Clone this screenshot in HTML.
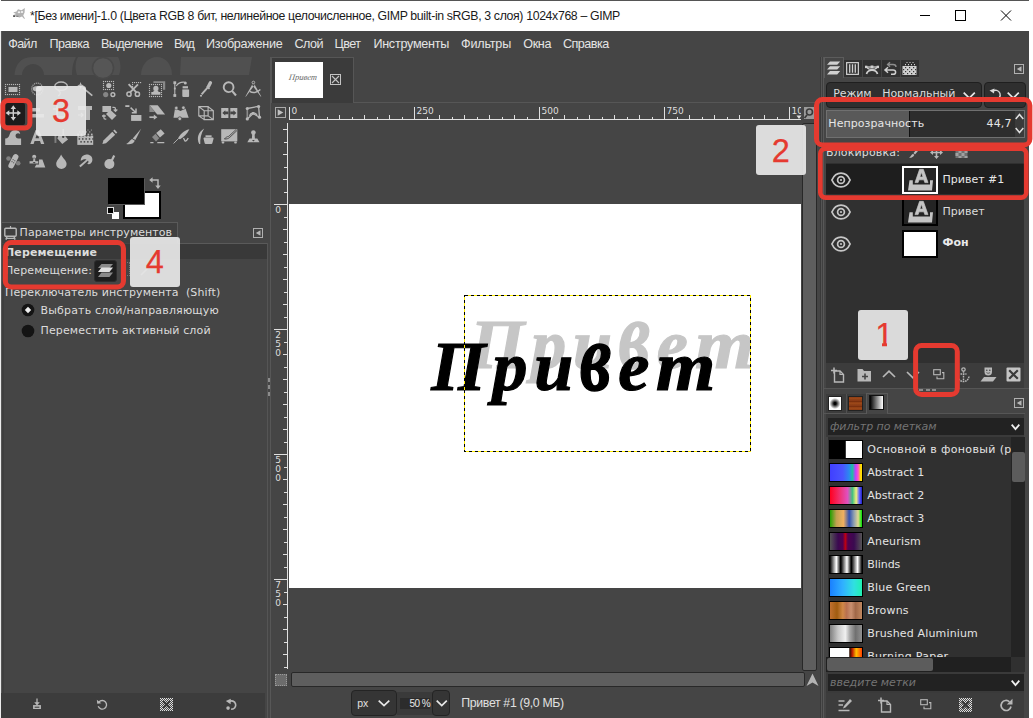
<!DOCTYPE html>
<html><head><meta charset="utf-8"><title>GIMP</title>
<style>
*{box-sizing:border-box;margin:0;padding:0}
html,body{width:1033px;height:718px;overflow:hidden;background:#454545}
body{position:relative;font-family:'DejaVu Sans','Liberation Sans',sans-serif;font-size:11px;color:#dcdcdc}
.a{position:absolute}
.t{position:absolute;white-space:pre}
svg{position:absolute;overflow:visible}
</style></head><body>
<div class="a" style="left:0px;top:0px;width:1033px;height:31px;background:#fff;"></div>
<div class="a" style="left:1px;top:0px;width:1028px;height:1px;background:#555;"></div>
<div class="t" style="left:30.0px;top:9.00px;line-height:14.00px;font-family:'Liberation Sans',sans-serif;font-size:12.3px;color:#1a1a1a;letter-spacing:-0.356px;">*[Без имени]-1.0 (Цвета RGB 8 бит, нелинейное целочисленное, GIMP built-in sRGB, 3 слоя) 1024x768 – GIMP</div>
<svg style="left:0;top:0" width="30" height="30" viewBox="0 0 30 30"><path d="M13.2 12.6 L16.5 11.4 L18 9.3 L21.5 10.3 L24.8 8 L24.6 12.5 L23.2 15.6 L24.9 18.6 L24.3 18.9 L22 16.6 L19.5 17.6 L16.5 16.6 L13.3 17 L13 15.2 L16 14 Z" fill="#b2b2b2"/><ellipse cx="19" cy="12.3" rx="1.3" ry="1" fill="#f4f4f4"/><ellipse cx="22" cy="12" rx="1.2" ry="1" fill="#f4f4f4"/><rect x="13.2" y="15.5" width="1.8" height="1.3" fill="#3a3a3a"/><path d="M16.2 16.3 h2.2" stroke="#666" stroke-width="0.8"/></svg>
<svg style="left:900px;top:0" width="133" height="31" viewBox="0 0 133 31"><g stroke="#000" stroke-width="1" fill="none"><path d="M20 15.5h10"/><rect x="55.5" y="10.5" width="10" height="10"/><path d="M101 10.5l10 10M111 10.5l-10 10"/></g></svg>
<div class="a" style="left:0px;top:31px;width:1033px;height:26px;background:#454545;"></div>
<div class="t" style="left:8.3px;top:37.00px;line-height:14.00px;font-family:'Liberation Sans',sans-serif;font-size:12.6px;color:#e4e4e4;letter-spacing:-0.642px;">Файл</div>
<div class="t" style="left:49.4px;top:37.00px;line-height:14.00px;font-family:'Liberation Sans',sans-serif;font-size:12.6px;color:#e4e4e4;letter-spacing:-0.491px;">Правка</div>
<div class="t" style="left:101.0px;top:37.00px;line-height:14.00px;font-family:'Liberation Sans',sans-serif;font-size:12.6px;color:#e4e4e4;letter-spacing:-0.582px;">Выделение</div>
<div class="t" style="left:174.0px;top:37.00px;line-height:14.00px;font-family:'Liberation Sans',sans-serif;font-size:12.6px;color:#e4e4e4;letter-spacing:-0.932px;">Вид</div>
<div class="t" style="left:206.0px;top:37.00px;line-height:14.00px;font-family:'Liberation Sans',sans-serif;font-size:12.6px;color:#e4e4e4;letter-spacing:-0.259px;">Изображение</div>
<div class="t" style="left:294.5px;top:37.00px;line-height:14.00px;font-family:'Liberation Sans',sans-serif;font-size:12.6px;color:#e4e4e4;letter-spacing:-0.531px;">Слой</div>
<div class="t" style="left:334.5px;top:37.00px;line-height:14.00px;font-family:'Liberation Sans',sans-serif;font-size:12.6px;color:#e4e4e4;letter-spacing:-0.559px;">Цвет</div>
<div class="t" style="left:373.4px;top:37.00px;line-height:14.00px;font-family:'Liberation Sans',sans-serif;font-size:12.6px;color:#e4e4e4;letter-spacing:-0.266px;">Инструменты</div>
<div class="t" style="left:461.0px;top:37.00px;line-height:14.00px;font-family:'Liberation Sans',sans-serif;font-size:12.6px;color:#e4e4e4;letter-spacing:-0.194px;">Фильтры</div>
<div class="t" style="left:523.3px;top:37.00px;line-height:14.00px;font-family:'Liberation Sans',sans-serif;font-size:12.6px;color:#e4e4e4;letter-spacing:-0.391px;">Окна</div>
<div class="t" style="left:563.0px;top:37.00px;line-height:14.00px;font-family:'Liberation Sans',sans-serif;font-size:12.6px;color:#e4e4e4;letter-spacing:-0.544px;">Справка</div>
<div class="a" style="left:0px;top:31px;width:1px;height:687px;background:#ececec;"></div>
<div class="a" style="left:1px;top:31px;width:1px;height:687px;background:#575757;"></div>
<svg style="left:0;top:56px" width="266" height="20" viewBox="0 56 266 20"><g fill="#505050"><path d="M14.5 75 C15 66 20 57 32 57 L76 57 C73 62 72 68 72 75 L44 75 C44 69 39 64 33 64 C27 64 22 69 22 75Z"/><path d="M78 57 L118 57 C121 62 121 70 119 75 L77 75 C75 69 75 62 78 57Z"/><path d="M141 75 C141 65 148 57 157 57 C166 57 172 65 172 75Z"/><path d="M181 57 L252 57 L249 75 L180 75Z"/></g><circle cx="103" cy="68" r="10.5" fill="#565656"/><circle cx="103" cy="68" r="10.5" fill="none" stroke="#484848" stroke-width="1.5"/></svg>
<div class="a" style="left:5px;top:103px;width:20px;height:22px;background:#1c1c1c;border-radius:2px"></div>
<svg style="left:5px;top:81px" width="16" height="16" viewBox="0 0 16 16"><rect x="-0.07" y="2.93" width="1.15" height="1.15" fill="#b8b8b8"/><rect x="-0.07" y="12.93" width="1.15" height="1.15" fill="#b8b8b8"/><rect x="1.93" y="2.93" width="1.15" height="1.15" fill="#b8b8b8"/><rect x="1.93" y="12.93" width="1.15" height="1.15" fill="#b8b8b8"/><rect x="3.93" y="2.93" width="1.15" height="1.15" fill="#b8b8b8"/><rect x="3.93" y="12.93" width="1.15" height="1.15" fill="#b8b8b8"/><rect x="5.93" y="2.93" width="1.15" height="1.15" fill="#b8b8b8"/><rect x="5.93" y="12.93" width="1.15" height="1.15" fill="#b8b8b8"/><rect x="7.93" y="2.93" width="1.15" height="1.15" fill="#b8b8b8"/><rect x="7.93" y="12.93" width="1.15" height="1.15" fill="#b8b8b8"/><rect x="9.93" y="2.93" width="1.15" height="1.15" fill="#b8b8b8"/><rect x="9.93" y="12.93" width="1.15" height="1.15" fill="#b8b8b8"/><rect x="11.93" y="2.93" width="1.15" height="1.15" fill="#b8b8b8"/><rect x="11.93" y="12.93" width="1.15" height="1.15" fill="#b8b8b8"/><rect x="13.93" y="2.93" width="1.15" height="1.15" fill="#b8b8b8"/><rect x="13.93" y="12.93" width="1.15" height="1.15" fill="#b8b8b8"/><rect x="-0.07" y="4.93" width="1.15" height="1.15" fill="#b8b8b8"/><rect x="13.93" y="4.93" width="1.15" height="1.15" fill="#b8b8b8"/><rect x="-0.07" y="6.93" width="1.15" height="1.15" fill="#b8b8b8"/><rect x="13.93" y="6.93" width="1.15" height="1.15" fill="#b8b8b8"/><rect x="-0.07" y="8.93" width="1.15" height="1.15" fill="#b8b8b8"/><rect x="13.93" y="8.93" width="1.15" height="1.15" fill="#b8b8b8"/><rect x="-0.07" y="10.93" width="1.15" height="1.15" fill="#b8b8b8"/><rect x="13.93" y="10.93" width="1.15" height="1.15" fill="#b8b8b8"/><rect x="3.5" y="5.9" width="9" height="5.1" fill="#b8b8b8"/></svg>
<svg style="left:29px;top:81px" width="16" height="16" viewBox="0 0 16 16"><rect x="13.35" y="7.45" width="1.1" height="1.1" fill="#b8b8b8"/><rect x="13.01" y="9.47" width="1.1" height="1.1" fill="#b8b8b8"/><rect x="12.04" y="11.24" width="1.1" height="1.1" fill="#b8b8b8"/><rect x="10.55" y="12.56" width="1.1" height="1.1" fill="#b8b8b8"/><rect x="8.72" y="13.26" width="1.1" height="1.1" fill="#b8b8b8"/><rect x="6.78" y="13.26" width="1.1" height="1.1" fill="#b8b8b8"/><rect x="4.95" y="12.56" width="1.1" height="1.1" fill="#b8b8b8"/><rect x="3.46" y="11.24" width="1.1" height="1.1" fill="#b8b8b8"/><rect x="2.49" y="9.47" width="1.1" height="1.1" fill="#b8b8b8"/><rect x="2.15" y="7.45" width="1.1" height="1.1" fill="#b8b8b8"/><rect x="2.49" y="5.43" width="1.1" height="1.1" fill="#b8b8b8"/><rect x="3.46" y="3.66" width="1.1" height="1.1" fill="#b8b8b8"/><rect x="4.95" y="2.34" width="1.1" height="1.1" fill="#b8b8b8"/><rect x="6.78" y="1.64" width="1.1" height="1.1" fill="#b8b8b8"/><rect x="8.72" y="1.64" width="1.1" height="1.1" fill="#b8b8b8"/><rect x="10.55" y="2.34" width="1.1" height="1.1" fill="#b8b8b8"/><rect x="12.04" y="3.66" width="1.1" height="1.1" fill="#b8b8b8"/><rect x="13.01" y="5.43" width="1.1" height="1.1" fill="#b8b8b8"/><ellipse cx="8.3" cy="7.8" rx="4.6" ry="2.7" fill="#b8b8b8"/></svg>
<svg style="left:53px;top:81px" width="16" height="16" viewBox="0 0 16 16"><ellipse cx="8.1" cy="5.2" rx="6.3" ry="4.2" fill="none" stroke="#b8b8b8" stroke-width="1.3"/><path d="M4.8 8.8 C5.5 10.5 8 10.5 7.2 12.5 C6.8 13.8 6 14.5 5 15" fill="none" stroke="#b8b8b8" stroke-width="1.2"/></svg>
<svg style="left:77px;top:81px" width="16" height="16" viewBox="0 0 16 16"><path d="M6 6.8 L15.3 14.6" stroke="#b8b8b8" stroke-width="1.7"/><path d="M3.6 1 L4.5 3.6 L7 4.6 L4.5 5.6 L3.6 8.2 L2.7 5.6 L0.2 4.6 L2.7 3.6Z" fill="#b8b8b8"/></svg>
<svg style="left:101px;top:81px" width="16" height="16" viewBox="0 0 16 16"><rect x="1.93" y="-0.07" width="1.15" height="1.15" fill="#b8b8b8"/><rect x="1.93" y="7.93" width="1.15" height="1.15" fill="#b8b8b8"/><rect x="3.93" y="-0.07" width="1.15" height="1.15" fill="#b8b8b8"/><rect x="3.93" y="7.93" width="1.15" height="1.15" fill="#b8b8b8"/><rect x="5.93" y="-0.07" width="1.15" height="1.15" fill="#b8b8b8"/><rect x="5.93" y="7.93" width="1.15" height="1.15" fill="#b8b8b8"/><rect x="7.93" y="-0.07" width="1.15" height="1.15" fill="#b8b8b8"/><rect x="7.93" y="7.93" width="1.15" height="1.15" fill="#b8b8b8"/><rect x="9.93" y="-0.07" width="1.15" height="1.15" fill="#b8b8b8"/><rect x="9.93" y="7.93" width="1.15" height="1.15" fill="#b8b8b8"/><rect x="11.93" y="-0.07" width="1.15" height="1.15" fill="#b8b8b8"/><rect x="11.93" y="7.93" width="1.15" height="1.15" fill="#b8b8b8"/><rect x="1.93" y="1.93" width="1.15" height="1.15" fill="#b8b8b8"/><rect x="11.93" y="1.93" width="1.15" height="1.15" fill="#b8b8b8"/><rect x="1.93" y="3.93" width="1.15" height="1.15" fill="#b8b8b8"/><rect x="11.93" y="3.93" width="1.15" height="1.15" fill="#b8b8b8"/><rect x="1.93" y="5.93" width="1.15" height="1.15" fill="#b8b8b8"/><rect x="11.93" y="5.93" width="1.15" height="1.15" fill="#b8b8b8"/><circle cx="7.8" cy="4.5" r="2.6" fill="#b8b8b8"/><circle cx="4.7" cy="13.6" r="2.6" fill="#858585"/><circle cx="11.9" cy="13.6" r="1.9" fill="none" stroke="#b8b8b8" stroke-width="1.4"/></svg>
<svg style="left:125px;top:81px" width="16" height="16" viewBox="0 0 16 16"><rect x="7.00" y="1.00" width="1.15" height="1.15" fill="#b8b8b8"/><rect x="9.00" y="1.00" width="1.15" height="1.15" fill="#b8b8b8"/><rect x="11.00" y="1.00" width="1.15" height="1.15" fill="#b8b8b8"/><rect x="13.00" y="1.00" width="1.15" height="1.15" fill="#b8b8b8"/><rect x="15.00" y="1.00" width="1.15" height="1.15" fill="#b8b8b8"/><rect x="7.00" y="3.00" width="1.15" height="1.15" fill="#b8b8b8"/><rect x="7.00" y="5.00" width="1.15" height="1.15" fill="#b8b8b8"/><path d="M3.6 3.2 L11.6 11.6 M13 3.4 L4.8 11.6" stroke="#b8b8b8" stroke-width="1.9" fill="none"/><circle cx="4" cy="13.2" r="2.1" fill="none" stroke="#b8b8b8" stroke-width="1.5"/><circle cx="12.4" cy="13.2" r="2.1" fill="none" stroke="#b8b8b8" stroke-width="1.5"/></svg>
<svg style="left:149px;top:81px" width="16" height="16" viewBox="0 0 16 16"><path d="M4.4 0.2 H16.2 V8.8 H14 V2 H4.4Z" fill="#8a8a8a"/><rect x="-0.07" y="2.93" width="1.15" height="1.15" fill="#b8b8b8"/><rect x="-0.07" y="14.93" width="1.15" height="1.15" fill="#b8b8b8"/><rect x="1.93" y="2.93" width="1.15" height="1.15" fill="#b8b8b8"/><rect x="1.93" y="14.93" width="1.15" height="1.15" fill="#b8b8b8"/><rect x="3.93" y="2.93" width="1.15" height="1.15" fill="#b8b8b8"/><rect x="3.93" y="14.93" width="1.15" height="1.15" fill="#b8b8b8"/><rect x="5.93" y="2.93" width="1.15" height="1.15" fill="#b8b8b8"/><rect x="5.93" y="14.93" width="1.15" height="1.15" fill="#b8b8b8"/><rect x="7.93" y="2.93" width="1.15" height="1.15" fill="#b8b8b8"/><rect x="7.93" y="14.93" width="1.15" height="1.15" fill="#b8b8b8"/><rect x="9.93" y="2.93" width="1.15" height="1.15" fill="#b8b8b8"/><rect x="9.93" y="14.93" width="1.15" height="1.15" fill="#b8b8b8"/><rect x="11.93" y="2.93" width="1.15" height="1.15" fill="#b8b8b8"/><rect x="11.93" y="14.93" width="1.15" height="1.15" fill="#b8b8b8"/><rect x="-0.07" y="4.93" width="1.15" height="1.15" fill="#b8b8b8"/><rect x="11.93" y="4.93" width="1.15" height="1.15" fill="#b8b8b8"/><rect x="-0.07" y="6.93" width="1.15" height="1.15" fill="#b8b8b8"/><rect x="11.93" y="6.93" width="1.15" height="1.15" fill="#b8b8b8"/><rect x="-0.07" y="8.93" width="1.15" height="1.15" fill="#b8b8b8"/><rect x="11.93" y="8.93" width="1.15" height="1.15" fill="#b8b8b8"/><rect x="-0.07" y="10.93" width="1.15" height="1.15" fill="#b8b8b8"/><rect x="11.93" y="10.93" width="1.15" height="1.15" fill="#b8b8b8"/><rect x="-0.07" y="12.93" width="1.15" height="1.15" fill="#b8b8b8"/><rect x="11.93" y="12.93" width="1.15" height="1.15" fill="#b8b8b8"/><circle cx="6.9" cy="7.4" r="2.6" fill="#b8b8b8"/><path d="M2.3 13.7 V11 H4.4 V9.7 H9.4 V11 H11.4 V13.7Z" fill="#b8b8b8"/></svg>
<svg style="left:173px;top:81px" width="16" height="16" viewBox="0 0 16 16"><path d="M1.8 1.5v13" stroke="#b8b8b8" stroke-width="1.1"/><rect x="0.4" y="0.3" width="2.8" height="2.8" fill="#b8b8b8"/><rect x="0.4" y="13.1" width="2.8" height="2.8" fill="#b8b8b8"/><rect x="0.9" y="6.6" width="1.8" height="1.8" fill="#b8b8b8"/><path d="M3.3 5 C5 2.2 8.5 0.8 11.8 1.2" fill="none" stroke="#b8b8b8" stroke-width="1.1"/><circle cx="12.3" cy="2" r="1.5" fill="#b8b8b8"/><rect x="9.6" y="5.2" width="5.4" height="1.9" fill="#b8b8b8"/><rect x="9.6" y="7.4" width="5.4" height="0.9" fill="#8a8a8a"/><path d="M9.3 8.5 h6.8 v6.5 a1 1 0 0 1 -1 1 h-4.8 a1 1 0 0 1 -1 -1Z" fill="#b8b8b8"/></svg>
<svg style="left:197px;top:81px" width="16" height="16" viewBox="0 0 16 16"><path d="M13.4 1.8 L11.6 5.2" stroke="#b8b8b8" stroke-width="3.4" stroke-linecap="round"/><path d="M9.6 5.3 L12.5 7.9" stroke="#b8b8b8" stroke-width="1.6"/><path d="M10.8 6.4 L4.6 13.4" stroke="#b8b8b8" stroke-width="1.9"/><circle cx="4" cy="14.8" r="1.05" fill="#b8b8b8"/></svg>
<svg style="left:221px;top:81px" width="16" height="16" viewBox="0 0 16 16"><circle cx="7.6" cy="6.2" r="4.9" fill="none" stroke="#b8b8b8" stroke-width="1.9"/><path d="M11 9.9 L15 14.5" stroke="#b8b8b8" stroke-width="2.1"/></svg>
<svg style="left:245px;top:81px" width="16" height="16" viewBox="0 0 16 16"><path d="M8.4 1.5 L9.6 4 L0.8 15.8 L0.4 15.6 L7.2 3.6Z M8.4 1.5 L7.2 4 L15.9 15.8 L16.3 15.6 L9.6 3.6Z" fill="#b8b8b8"/><circle cx="8.4" cy="1.5" r="1.3" fill="none" stroke="#b8b8b8" stroke-width="0.9"/><path d="M4.8 10.4 C7.5 12.2 12 12 15.4 8.6" fill="none" stroke="#b8b8b8" stroke-width="1.4"/></svg>
<svg style="left:5px;top:105px" width="16" height="16" viewBox="0 0 16 16"><path d="M8.3 0.3 L11 4 H9 V7.3 H12.3 V5.3 L16 8 L12.3 10.7 V8.7 H9 V12 H11 L8.3 15.7 L5.6 12 H7.6 V8.7 H4.3 V10.7 L0.6 8 L4.3 5.3 V7.3 H7.6 V4 H5.6Z" fill="#d0d0d0"/></svg>
<svg style="left:29px;top:105px" width="16" height="16" viewBox="0 0 16 16"><rect x="2" y="3" width="9" height="3.5" fill="#b8b8b8"/><rect x="2" y="9" width="13" height="3.5" fill="#b8b8b8"/><path d="M1 1v14" stroke="#b8b8b8" stroke-width="1"/></svg>
<svg style="left:53px;top:105px" width="16" height="16" viewBox="0 0 16 16"><path d="M4 0v12h12M0 4h12v12" fill="none" stroke="#b8b8b8" stroke-width="1.6"/></svg>
<svg style="left:77px;top:105px" width="16" height="16" viewBox="0 0 16 16"><rect x="1" y="1" width="14" height="4" fill="#b8b8b8"/><rect x="8" y="5" width="5" height="10" fill="#b8b8b8"/><path d="M1 10h5m-2-2l2 2l-2 2" stroke="#b8b8b8" fill="none" stroke-width="1.2"/></svg>
<svg style="left:101px;top:105px" width="16" height="16" viewBox="0 0 16 16"><path d="M1.4 0.9 H10.1 V5.2 L7.5 7 H1.4Z" fill="#b8b8b8"/><path d="M9.2 4.8 L15.5 10.5 L11 15 L5 9.1Z" fill="#b8b8b8"/><path d="M11.4 2.4 h1.6 c1 0 1.5 .5 1.5 1.5 v2 m-1.8 -1.4 l1.8 1.9 l1.8 -1.9" fill="none" stroke="#b8b8b8" stroke-width="1.2"/><path d="M2.9 9.6 v3.2 c0 1 .5 1.4 1.4 1.4 h1 M1 11 h3.8" fill="none" stroke="#b8b8b8" stroke-width="1.3"/></svg>
<svg style="left:125px;top:105px" width="16" height="16" viewBox="0 0 16 16"><rect x="0.3" y="0.2" width="4.1" height="1.8" fill="#b8b8b8"/><path d="M5.6 2.6 L10.4 7.2 M11 3.6 V7.8 H6.8" fill="none" stroke="#b8b8b8" stroke-width="1.5"/><rect x="6.1" y="10" width="10.3" height="5.9" fill="#b8b8b8"/></svg>
<svg style="left:149px;top:105px" width="16" height="16" viewBox="0 0 16 16"><path d="M0.4 0.2 H8.7 L16.1 9.6 H8.3Z" fill="#b8b8b8"/><path d="M0.4 0.2 V7 H6.1Z" fill="#8a8a8a"/><path d="M0.4 12.2 h5.5" stroke="#b8b8b8" stroke-width="1.7"/><path d="M4.8 9.6 L8.4 12.2 L4.8 14.8Z" fill="#b8b8b8"/></svg>
<svg style="left:173px;top:105px" width="16" height="16" viewBox="0 0 16 16"><path d="M2 3.5 L7.5 6 L12.5 3.5 L15.7 12.8 H0.5Z" fill="#b8b8b8"/><circle cx="3.3" cy="3" r="1.7" fill="#b8b8b8" stroke="#454545" stroke-width=".5"/><circle cx="10.4" cy="2.8" r="1.7" fill="#b8b8b8" stroke="#454545" stroke-width=".5"/><circle cx="6.8" cy="13.7" r="1.9" fill="#b8b8b8" stroke="#454545" stroke-width=".8"/></svg>
<svg style="left:197px;top:105px" width="16" height="16" viewBox="0 0 16 16"><path d="M1.8 1.6 H11.1 V10.9 H1.8Z M7.2 5.7 H16.3 V14.6 H7.2Z M1.8 1.6 L7.2 5.7 M11.1 1.6 L16.3 5.7 M1.8 10.9 L7.2 14.6 M11.1 10.9 L16.3 14.6" fill="none" stroke="#b8b8b8" stroke-width="1.15"/></svg>
<svg style="left:221px;top:105px" width="16" height="16" viewBox="0 0 16 16"><rect x="0.2" y="3" width="7.2" height="10" fill="#b8b8b8"/><rect x="9.3" y="3" width="7" height="10" fill="#b8b8b8"/><path d="M1.3 7.9 L4.3 5.3 V6.6 H7.4 V9.2 H4.3 V10.5Z M15.4 7.9 L12.4 5.3 V6.6 H9.3 V9.2 H12.4 V10.5Z" fill="#454545"/></svg>
<svg style="left:245px;top:105px" width="16" height="16" viewBox="0 0 16 16"><path d="M2.3 3.5 L2.3 13.9" stroke="#8c8c8c" stroke-width="1.6"/><path d="M2.3 3.5 L13.6 1.3 L14.5 12.2 L8.1 8.5 L2.3 13.9" fill="none" stroke="#b8b8b8" stroke-width="1.3"/><path d="M4.6 11 C5.5 7.2 10 6.8 12 9.8" fill="none" stroke="#b8b8b8" stroke-width="1.3"/><circle cx="2.3" cy="3.5" r="1.6" fill="#b8b8b8"/><circle cx="13.6" cy="1.5" r="1.6" fill="#b8b8b8"/><circle cx="14.5" cy="12.2" r="1.6" fill="#b8b8b8"/><circle cx="2.3" cy="13.9" r="1.6" fill="#b8b8b8"/><circle cx="8.1" cy="8.3" r="1.4" fill="#b8b8b8"/></svg>
<svg style="left:5px;top:129px" width="16" height="16" viewBox="0 0 16 16"><path d="M0.2 15.9 V9.6 C3 9.6 4 7.5 4.6 5.5 C5.6 1.8 9 0.2 12.5 1.5 C14 2.1 15 3.4 15.2 5 C13.8 4 12.2 4 11.2 5 C10 6.2 10.5 9.2 13.2 9.6 H16.1 V15.9Z" fill="#b8b8b8"/></svg>
<svg style="left:29px;top:129px" width="16" height="16" viewBox="0 0 16 16"><path d="M1.3 14.9 L6.6 0.9 H10 L15.3 14.9 H12 L11 11.9 H5.6 L4.6 14.9Z M6.5 9.3 H10.1 L8.3 3.8Z" fill="#b8b8b8"/></svg>
<svg style="left:53px;top:129px" width="16" height="16" viewBox="0 0 16 16"><rect x="1.5" y="5.7" width="1.9" height="8.2" fill="#808080"/><path d="M5.4 6.7 L11.2 5.7 L15 10.5 L9.3 14.9 L4.4 9.6Z" fill="#b8b8b8"/><path d="M10.2 0 v7.5" stroke="#b8b8b8" stroke-width="1.4"/><circle cx="10.2" cy="7.8" r="1.2" fill="#454545"/></svg>
<svg style="left:77px;top:129px" width="16" height="16" viewBox="0 0 16 16"><rect x="0.3" y="6.7" width="15.9" height="9.2" fill="#b8b8b8"/><rect x="1.60" y="9.20" width="1.5" height="1.5" fill="#454545"/><rect x="5.00" y="9.20" width="1.5" height="1.5" fill="#454545"/><rect x="8.40" y="9.20" width="1.5" height="1.5" fill="#454545"/><rect x="11.80" y="9.20" width="1.5" height="1.5" fill="#454545"/><rect x="15.20" y="9.20" width="1.5" height="1.5" fill="#454545"/><rect x="3.30" y="12.10" width="1.5" height="1.5" fill="#454545"/><rect x="6.70" y="12.10" width="1.5" height="1.5" fill="#454545"/><rect x="10.10" y="12.10" width="1.5" height="1.5" fill="#454545"/><rect x="13.50" y="12.10" width="1.5" height="1.5" fill="#454545"/><rect x="0.30" y="4.60" width="1.7" height="1.7" fill="#b8b8b8"/><rect x="3.70" y="4.60" width="1.7" height="1.7" fill="#b8b8b8"/><rect x="7.10" y="4.60" width="1.7" height="1.7" fill="#b8b8b8"/><rect x="10.50" y="4.60" width="1.7" height="1.7" fill="#b8b8b8"/><rect x="13.90" y="4.60" width="1.7" height="1.7" fill="#b8b8b8"/><rect x="2.00" y="6.10" width="1.4" height="1.4" fill="#454545"/><rect x="5.40" y="6.10" width="1.4" height="1.4" fill="#454545"/><rect x="8.80" y="6.10" width="1.4" height="1.4" fill="#454545"/><rect x="12.20" y="6.10" width="1.4" height="1.4" fill="#454545"/><rect x="2.00" y="2.40" width="1.1" height="1.1" fill="#b8b8b8"/><rect x="5.40" y="2.40" width="1.1" height="1.1" fill="#b8b8b8"/><rect x="8.80" y="2.40" width="1.1" height="1.1" fill="#b8b8b8"/><rect x="12.20" y="2.40" width="1.1" height="1.1" fill="#b8b8b8"/><rect x="10.50" y="0.60" width="0.9" height="0.9" fill="#b8b8b8"/><rect x="13.90" y="0.60" width="0.9" height="0.9" fill="#b8b8b8"/></svg>
<svg style="left:101px;top:129px" width="16" height="16" viewBox="0 0 16 16"><path d="M11.3 2.8 L14.2 5.7 L5 14.2 L1.4 15 L2.4 11.4Z" fill="#b8b8b8"/><path d="M12.2 1.8 L13.6 0.6 L16.3 3.4 L15 4.8Z" fill="#b8b8b8"/></svg>
<svg style="left:125px;top:129px" width="16" height="16" viewBox="0 0 16 16"><path d="M16.1 -0.3 L10.4 11 L7.7 9.4Z" fill="#b8b8b8"/><path d="M7 10 L9.8 11.7 C8.8 14.8 5 15.6 1.2 15 C3.6 14 4.6 11.5 7 10Z" fill="#b8b8b8"/></svg>
<svg style="left:149px;top:129px" width="16" height="16" viewBox="0 0 16 16"><path d="M11.8 0.2 L15.6 4.6 L10.9 8.6 L7.2 4.1Z" fill="#b8b8b8"/><path d="M6.6 4.8 L10.2 9.2 L7 12.4 L3 8Z" fill="#8a8a8a"/><path d="M1.3 13.7h3.2M8.3 13.7h7" stroke="#b8b8b8" stroke-width="1.3"/></svg>
<svg style="left:173px;top:129px" width="16" height="16" viewBox="0 0 16 16"><path d="M16.4 0.2 C10.5 1.5 6.8 5.5 5 9.6 L7 10.2 C10.5 8.2 14.3 5 16.4 0.2Z" fill="#b8b8b8"/><path d="M0.5 14.5 L5.6 9.4" stroke="#b8b8b8" stroke-width=".9"/><path d="M10.5 9 L12 12 C12.8 12.6 14.2 11.2 15.2 9" fill="none" stroke="#b8b8b8" stroke-width="1.3"/></svg>
<svg style="left:197px;top:129px" width="16" height="16" viewBox="0 0 16 16"><path d="M7.2 -0.6 C1.5 3 -0.8 8.5 2.2 15 L3.3 15 C3 10 4 4 7.2 -0.6Z" fill="#b8b8b8"/><rect x="8.5" y="6.3" width="6.1" height="1.9" fill="#b8b8b8"/><path d="M6.5 9.6 C6.5 8.8 7 8.5 7.8 8.5 h7.5 c.8 0 1.3 .3 1.3 1.1 L15.4 14 c-.1 .7 -.5 1 -1.2 1 h-5.4 c-.7 0 -1.1 -.3 -1.2 -1Z" fill="#b8b8b8"/></svg>
<svg style="left:221px;top:129px" width="16" height="16" viewBox="0 0 16 16"><rect x="0.2" y="0.2" width="16.1" height="12.2" fill="#b8b8b8"/><rect x="0.7" y="12.4" width="2.6" height="2.2" rx=".8" fill="#b8b8b8"/><rect x="13.2" y="12.4" width="2.6" height="2.2" rx=".8" fill="#b8b8b8"/><path d="M15.6 0 L7.8 7.3 C6 7.6 4.5 8.6 3.4 10 C5.5 10.2 7.5 9.6 8.8 8.3 L16.3 1.2" fill="#b8b8b8" stroke="#454545" stroke-width="0.9"/></svg>
<svg style="left:245px;top:129px" width="16" height="16" viewBox="0 0 16 16"><circle cx="8.4" cy="3.6" r="2.3" fill="#b8b8b8"/><path d="M7.2 5 h2.4 l.3 4.4 h2.4 L14.5 13.3 H2.3 L4.5 9.4 h2.4Z" fill="#b8b8b8"/><path d="M7 10.9 h2.8 l-1.4 1.7Z" fill="#454545"/></svg>
<svg style="left:5px;top:154px" width="16" height="16" viewBox="0 0 16 16"><circle cx="3.5" cy="4.5" r="2.3" fill="#808080"/><circle cx="13.2" cy="9.3" r="2.3" fill="#808080"/><rect x="-7.7" y="-2.8" width="15.4" height="5.6" rx="2.7" transform="translate(8.4 7.2) rotate(-63)" fill="#b8b8b8"/><rect x="7.60" y="5.20" width="1.0" height="1.0" fill="#454545"/><rect x="9.30" y="6.30" width="1.0" height="1.0" fill="#454545"/><rect x="6.50" y="7.20" width="1.0" height="1.0" fill="#454545"/><rect x="8.20" y="8.30" width="1.0" height="1.0" fill="#454545"/></svg>
<svg style="left:29px;top:154px" width="16" height="16" viewBox="0 0 16 16"><path d="M10 5.4 H13.4 L16.3 13.6 H5.7 L7.3 10.6 H10Z" fill="#b8b8b8"/><circle cx="5.2" cy="2.8" r="2" fill="#b8b8b8"/><path d="M4.2 4 h2 l.3 2.9 h3 V9.8 H0.3 V6.9 h3.6Z" fill="#b8b8b8" stroke="#454545" stroke-width=".5"/><path d="M3.7 7.9 h3 l-1.5 1.5Z" fill="#454545"/></svg>
<svg style="left:53px;top:154px" width="16" height="16" viewBox="0 0 16 16"><path d="M8.1 0.6 C10 4.5 13.6 7 13.6 9.9 A5.2 5 0 0 1 3.2 9.9 C3.2 7 6.4 4.5 8.1 0.6Z" fill="#b8b8b8"/></svg>
<svg style="left:77px;top:154px" width="16" height="16" viewBox="0 0 16 16"><path d="M8.5 0.7 C12.5 0 15.6 2.5 15.4 6 C15.2 9.5 12.3 11 10 9.8 C11.5 9 12 7.5 11 6.4 L3.6 13.2 L2.2 11.8 L9.5 5.4 C7.5 5 5.2 5.5 3.8 7 C3.6 3.6 5.6 1.2 8.5 0.7Z" fill="#b8b8b8"/></svg>
<svg style="left:101px;top:154px" width="16" height="16" viewBox="0 0 16 16"><circle cx="8.4" cy="10" r="5" fill="#b8b8b8"/><path d="M10.8 6.4 L13.2 1.6" stroke="#b8b8b8" stroke-width="2.2"/></svg>
<div class="a" style="left:123px;top:191px;width:38px;height:27.5px;background:#000;"></div>
<div class="a" style="left:124.6px;top:192.7px;width:34.7px;height:24.4px;background:#fff;"></div>
<div class="a" style="left:108.5px;top:178.5px;width:36.5px;height:26px;background:#5a5a5a;"></div>
<div class="a" style="left:107.5px;top:177.5px;width:36.5px;height:26px;background:#000;"></div>
<svg style="left:149px;top:177px" width="12" height="12" viewBox="0 0 12 12"><path d="M3 3 h6 v6" fill="none" stroke="#b8b8b8" stroke-width="1.5"/><path d="M0.2 3 L3.6 0.3 V5.7Z M9 11.9 L6.3 8.4 H11.7Z" fill="#b8b8b8"/></svg>
<div class="a" style="left:112.2px;top:211.8px;width:7px;height:7px;background:#fff;"></div>
<div class="a" style="left:107px;top:207px;width:7px;height:7px;background:#000;border:1px solid #e0e0e0"></div>
<div class="a" style="left:1px;top:222px;width:177px;height:21px;background:#3f3f3f;border:1px solid #5a5a5a;border-bottom:none"></div>
<div class="a" style="left:178px;top:243px;width:90px;height:1px;background:#5a5a5a;"></div>
<svg style="left:4px;top:226px" width="13" height="14" viewBox="0 0 13 14"><path d="M6.5 0v2" stroke="#b8b8b8" stroke-width="1.2"/><rect x="0.8" y="2.3" width="11.4" height="8" rx="1" fill="none" stroke="#b8b8b8" stroke-width="1.4"/><path d="M1.5 12.3h10M3 10.5 L2 13.8 M10 10.5 L11 13.8" stroke="#b8b8b8" stroke-width="1.3"/></svg>
<div class="t" style="left:19.6px;top:226.00px;line-height:13.00px;letter-spacing:0.039px;">Параметры инструментов</div>
<div class="a" style="left:253px;top:228px;width:10px;height:10px;background:#454545;border:1px solid #b0b0b0"></div>
<svg style="left:255px;top:230px" width="6" height="6" viewBox="0 0 6 6"><path d="M5.5 0.3 V5.7 L0.8 3Z" fill="#b8b8b8"/></svg>
<div class="a" style="left:2px;top:244px;width:265px;height:15px;background:#393939;"></div>
<div class="a" style="left:2px;top:244px;width:2px;height:449px;background:#3f3f3f;"></div>
<div class="t" style="left:5.0px;top:246.00px;line-height:13.00px;font-weight:700;letter-spacing:0.123px;">Перемещение</div>
<div class="t" style="left:5.0px;top:264.00px;line-height:13.00px;letter-spacing:0.099px;">Перемещение:</div>
<div class="a" style="left:94px;top:259.5px;width:23px;height:22px;background:#1e1e1e;border-radius:3px;border:1px solid #2c2c2c"></div>
<svg style="left:97px;top:263px" width="17" height="15" viewBox="0 0 17 15"><path d="M4.5 1 H16 L12.5 5 H1Z" fill="#8a8a8a"/><path d="M4.5 4.5 H16 L12.5 9 H1Z" fill="#e0e0e0"/><path d="M4.5 9.5 H16 L12.5 14 H1Z" fill="#8a8a8a"/></svg>
<div class="a" style="left:121px;top:262px;width:9px;height:14px;background:transparent;border:1px dotted #777"></div>
<svg style="left:140px;top:262px" width="14" height="14" viewBox="0 0 14 14"><path d="M1 13 L8 6" stroke="#999" stroke-width="1.5"/><circle cx="10" cy="4" r="2.5" fill="#999"/></svg>
<div class="t" style="left:5.0px;top:286.00px;line-height:13.00px;letter-spacing:0.114px;">Переключатель инструмента  (Shift)</div>
<svg style="left:21.2px;top:303.4px" width="14" height="14" viewBox="0 0 14 14"><circle cx="7" cy="7" r="6.3" fill="#141414"/></svg>
<svg style="left:21.2px;top:323.8px" width="14" height="14" viewBox="0 0 14 14"><circle cx="7" cy="7" r="6.3" fill="#141414"/></svg>
<svg style="left:21.2px;top:303.4px" width="14" height="14" viewBox="0 0 14 14"><path d="M7 3.8 L10.2 7 L7 10.2 L3.8 7Z" fill="#f0f0f0"/></svg>
<div class="t" style="left:40.5px;top:304.00px;line-height:13.00px;letter-spacing:0.173px;">Выбрать слой/направляющую</div>
<div class="t" style="left:40.5px;top:324.00px;line-height:13.00px;letter-spacing:0.137px;">Переместить активный слой</div>
<div class="a" style="left:1px;top:693px;width:264px;height:25px;background:#3c3c3c;"></div>
<svg style="left:31.6px;top:698.4px" width="10" height="11.8" viewBox="1 0 12 15"><path d="M7 0.5v7" stroke="#b8b8b8" stroke-width="1.6"/><path d="M3.5 5.5 L7 9.5 L10.5 5.5Z" fill="#b8b8b8"/><path d="M2 9 h10 v5 H2Z" fill="#b8b8b8"/><rect x="4" y="11" width="6" height="1.4" fill="#3c3c3c"/></svg>
<svg style="left:95.6px;top:698.3px" width="12.4" height="12.4" viewBox="0 0 14 15"><path d="M3 5 A5.2 5.2 0 1 1 2.2 10" fill="none" stroke="#b8b8b8" stroke-width="1.6"/><path d="M0.5 2 L1 7 L6 6.3Z" fill="#b8b8b8"/></svg>
<svg style="left:160px;top:698px" width="13" height="13" viewBox="0 0 13 13"><defs><pattern id="dz" width="2" height="2" patternUnits="userSpaceOnUse"><rect width="2" height="2" fill="#4a4a4a"/><rect width="1" height="1" fill="#e0e0e0"/><rect x="1" y="1" width="1" height="1" fill="#e0e0e0"/></pattern></defs><rect x="0" y="0" width="13" height="13" fill="url(#dz)" shape-rendering="crispEdges"/><path d="M3 3 L10 10 M10 3 L3 10" stroke="#3a3a3a" stroke-width="2.2"/></svg>
<svg style="left:225px;top:698.3px" width="12.4" height="12.4" viewBox="0 0 14 15"><path d="M4.5 4.5 A5 5 0 1 1 7 13.5" fill="none" stroke="#b8b8b8" stroke-width="2"/><path d="M0.5 3.5 L6.5 1 L6.3 7.5Z" fill="#b8b8b8"/><circle cx="3.2" cy="12.2" r="2.2" fill="#b8b8b8"/></svg>
<div class="a" style="left:267px;top:243px;width:1px;height:475px;background:#555;"></div>
<div class="a" style="left:270px;top:57px;width:1px;height:661px;background:#575757;"></div>
<div class="a" style="left:268px;top:378px;width:2px;height:4px;background:#8c8c8c;"></div>
<div class="a" style="left:268px;top:385px;width:2px;height:4px;background:#8c8c8c;"></div>
<div class="a" style="left:268px;top:392px;width:2px;height:4px;background:#8c8c8c;"></div>
<div class="a" style="left:271px;top:57px;width:83px;height:46px;background:#3b3b3b;border:1px solid #565656;border-bottom:none"></div>
<div class="a" style="left:354px;top:102px;width:466px;height:1px;background:#565656;"></div>
<div class="a" style="left:275px;top:62px;width:48px;height:36px;background:#fff;"></div>
<div class="t" style="left:289.0px;top:72.00px;line-height:10.00px;font-family:'Liberation Serif',serif;font-size:8.5px;font-style:italic;color:#666;transform:skewX(-8deg);">Привет</div>
<svg style="left:330px;top:74px" width="11" height="11" viewBox="0 0 11 11"><rect x="0.5" y="0.5" width="10" height="10" fill="none" stroke="#c4c4c4" stroke-width="1"/><path d="M2 2 L9 9 M9 2 L2 9" stroke="#c4c4c4" stroke-width="1.1"/></svg>
<div class="a" style="left:275px;top:107px;width:11px;height:11px;background:#454545;border:1px solid #aaa"></div>
<svg style="left:277px;top:109px" width="7" height="7" viewBox="0 0 7 7"><path d="M0.7 0.3 V6.7 L6.3 3.5Z" fill="#c0c0c0"/></svg>
<div class="a" style="left:289px;top:120px;width:513px;height:551px;background:#454545;"></div>
<div class="a" style="left:289px;top:204px;width:512px;height:384px;background:#fff;"></div>
<svg style="left:272px;top:104px" width="548" height="16" viewBox="272 104 548 16" shape-rendering="crispEdges"><rect x="289" y="119" width="512" height="1" fill="#e0e0e0"/><rect x="289" y="107" width="1" height="13" fill="#e0e0e0"/><rect x="302" y="117" width="1" height="3" fill="#e0e0e0"/><rect x="314" y="115" width="1" height="5" fill="#e0e0e0"/><rect x="327" y="117" width="1" height="3" fill="#e0e0e0"/><rect x="339" y="115" width="1" height="5" fill="#e0e0e0"/><rect x="352" y="117" width="1" height="3" fill="#e0e0e0"/><rect x="364" y="115" width="1" height="5" fill="#e0e0e0"/><rect x="377" y="117" width="1" height="3" fill="#e0e0e0"/><rect x="389" y="115" width="1" height="5" fill="#e0e0e0"/><rect x="402" y="117" width="1" height="3" fill="#e0e0e0"/><rect x="414" y="107" width="1" height="13" fill="#e0e0e0"/><rect x="427" y="117" width="1" height="3" fill="#e0e0e0"/><rect x="439" y="115" width="1" height="5" fill="#e0e0e0"/><rect x="452" y="117" width="1" height="3" fill="#e0e0e0"/><rect x="464" y="115" width="1" height="5" fill="#e0e0e0"/><rect x="477" y="117" width="1" height="3" fill="#e0e0e0"/><rect x="489" y="115" width="1" height="5" fill="#e0e0e0"/><rect x="502" y="117" width="1" height="3" fill="#e0e0e0"/><rect x="514" y="115" width="1" height="5" fill="#e0e0e0"/><rect x="527" y="117" width="1" height="3" fill="#e0e0e0"/><rect x="539" y="107" width="1" height="13" fill="#e0e0e0"/><rect x="552" y="117" width="1" height="3" fill="#e0e0e0"/><rect x="564" y="115" width="1" height="5" fill="#e0e0e0"/><rect x="577" y="117" width="1" height="3" fill="#e0e0e0"/><rect x="589" y="115" width="1" height="5" fill="#e0e0e0"/><rect x="602" y="117" width="1" height="3" fill="#e0e0e0"/><rect x="614" y="115" width="1" height="5" fill="#e0e0e0"/><rect x="627" y="117" width="1" height="3" fill="#e0e0e0"/><rect x="639" y="115" width="1" height="5" fill="#e0e0e0"/><rect x="652" y="117" width="1" height="3" fill="#e0e0e0"/><rect x="664" y="107" width="1" height="13" fill="#e0e0e0"/><rect x="677" y="117" width="1" height="3" fill="#e0e0e0"/><rect x="689" y="115" width="1" height="5" fill="#e0e0e0"/><rect x="702" y="117" width="1" height="3" fill="#e0e0e0"/><rect x="714" y="115" width="1" height="5" fill="#e0e0e0"/><rect x="727" y="117" width="1" height="3" fill="#e0e0e0"/><rect x="739" y="115" width="1" height="5" fill="#e0e0e0"/><rect x="752" y="117" width="1" height="3" fill="#e0e0e0"/><rect x="764" y="115" width="1" height="5" fill="#e0e0e0"/><rect x="777" y="117" width="1" height="3" fill="#e0e0e0"/><rect x="789" y="107" width="1" height="13" fill="#e0e0e0"/><path d="M796.5 115.5 h5 l-2.5 3.5Z" fill="#e0e0e0" shape-rendering="auto"/></svg>
<div class="t" style="left:291.5px;top:106.00px;line-height:10.00px;font-size:9px;color:#dedede;">0</div>
<div class="t" style="left:416.5px;top:106.00px;line-height:10.00px;font-size:9px;color:#dedede;">250</div>
<div class="t" style="left:541.5px;top:106.00px;line-height:10.00px;font-size:9px;color:#dedede;">500</div>
<div class="t" style="left:666.5px;top:106.00px;line-height:10.00px;font-size:9px;color:#dedede;">750</div>
<div class="a" style="left:791px;top:104px;width:10px;height:14px;overflow:hidden"><div class="t" style="left:0.5px;top:2.2px;font-size:9px;line-height:10.5px;color:#dedede">1000</div></div>
<svg style="left:272px;top:120px" width="17" height="551" viewBox="272 120 17 551" shape-rendering="crispEdges"><rect x="287" y="123" width="1" height="546" fill="#e0e0e0"/><rect x="283" y="129" width="5" height="1" fill="#e0e0e0"/><rect x="284" y="142" width="4" height="1" fill="#e0e0e0"/><rect x="283" y="154" width="5" height="1" fill="#e0e0e0"/><rect x="284" y="167" width="4" height="1" fill="#e0e0e0"/><rect x="283" y="179" width="5" height="1" fill="#e0e0e0"/><rect x="284" y="192" width="4" height="1" fill="#e0e0e0"/><rect x="274" y="204" width="14" height="1" fill="#e0e0e0"/><rect x="284" y="217" width="4" height="1" fill="#e0e0e0"/><rect x="283" y="229" width="5" height="1" fill="#e0e0e0"/><rect x="284" y="242" width="4" height="1" fill="#e0e0e0"/><rect x="283" y="254" width="5" height="1" fill="#e0e0e0"/><rect x="284" y="267" width="4" height="1" fill="#e0e0e0"/><rect x="283" y="279" width="5" height="1" fill="#e0e0e0"/><rect x="284" y="292" width="4" height="1" fill="#e0e0e0"/><rect x="283" y="304" width="5" height="1" fill="#e0e0e0"/><rect x="284" y="317" width="4" height="1" fill="#e0e0e0"/><rect x="274" y="329" width="14" height="1" fill="#e0e0e0"/><rect x="284" y="342" width="4" height="1" fill="#e0e0e0"/><rect x="283" y="354" width="5" height="1" fill="#e0e0e0"/><rect x="284" y="367" width="4" height="1" fill="#e0e0e0"/><rect x="283" y="379" width="5" height="1" fill="#e0e0e0"/><rect x="284" y="392" width="4" height="1" fill="#e0e0e0"/><rect x="283" y="404" width="5" height="1" fill="#e0e0e0"/><rect x="284" y="417" width="4" height="1" fill="#e0e0e0"/><rect x="283" y="429" width="5" height="1" fill="#e0e0e0"/><rect x="284" y="442" width="4" height="1" fill="#e0e0e0"/><rect x="274" y="454" width="14" height="1" fill="#e0e0e0"/><rect x="284" y="467" width="4" height="1" fill="#e0e0e0"/><rect x="283" y="479" width="5" height="1" fill="#e0e0e0"/><rect x="284" y="492" width="4" height="1" fill="#e0e0e0"/><rect x="283" y="504" width="5" height="1" fill="#e0e0e0"/><rect x="284" y="517" width="4" height="1" fill="#e0e0e0"/><rect x="283" y="529" width="5" height="1" fill="#e0e0e0"/><rect x="284" y="542" width="4" height="1" fill="#e0e0e0"/><rect x="283" y="554" width="5" height="1" fill="#e0e0e0"/><rect x="284" y="567" width="4" height="1" fill="#e0e0e0"/><rect x="274" y="579" width="14" height="1" fill="#e0e0e0"/><rect x="284" y="592" width="4" height="1" fill="#e0e0e0"/><rect x="283" y="604" width="5" height="1" fill="#e0e0e0"/><rect x="284" y="617" width="4" height="1" fill="#e0e0e0"/><rect x="283" y="629" width="5" height="1" fill="#e0e0e0"/><rect x="284" y="642" width="4" height="1" fill="#e0e0e0"/><rect x="283" y="654" width="5" height="1" fill="#e0e0e0"/><rect x="284" y="667" width="4" height="1" fill="#e0e0e0"/></svg>
<div class="t" style="left:275.3px;top:205.00px;line-height:10.00px;font-size:9px;color:#dedede;">0</div>
<div class="t" style="left:275.3px;top:330.00px;line-height:10.00px;font-size:9px;color:#dedede;">2</div><div class="t" style="left:275.3px;top:339.00px;line-height:10.00px;font-size:9px;color:#dedede;">5</div><div class="t" style="left:275.3px;top:348.00px;line-height:10.00px;font-size:9px;color:#dedede;">0</div>
<div class="t" style="left:275.3px;top:455.00px;line-height:10.00px;font-size:9px;color:#dedede;">5</div><div class="t" style="left:275.3px;top:464.00px;line-height:10.00px;font-size:9px;color:#dedede;">0</div><div class="t" style="left:275.3px;top:473.00px;line-height:10.00px;font-size:9px;color:#dedede;">0</div>
<div class="t" style="left:275.3px;top:580.00px;line-height:10.00px;font-size:9px;color:#dedede;">7</div><div class="t" style="left:275.3px;top:589.00px;line-height:10.00px;font-size:9px;color:#dedede;">5</div><div class="t" style="left:275.3px;top:598.00px;line-height:10.00px;font-size:9px;color:#dedede;">0</div>
<div class="a" style="left:804px;top:107px;width:10px;height:12px;background:#9a9a9a;"></div>
<svg style="left:804px;top:107px" width="10" height="12" viewBox="0 0 10 12"><circle cx="5.5" cy="5" r="3" fill="none" stroke="#3a3a3a" stroke-width="1.6"/><path d="M3 8 L0.5 11" stroke="#3a3a3a" stroke-width="1.8"/></svg>
<div class="a" style="left:802px;top:123px;width:15px;height:548px;background:#5e5e5e;border:1px solid #282828;border-radius:2px"></div>
<div class="a" style="left:291px;top:672px;width:514px;height:15px;background:#5e5e5e;border:1px solid #282828;border-radius:2px"></div>
<div class="a" style="left:275px;top:674px;width:12px;height:12px;background:#6c6c6c;border:1px dotted #9a9a9a"></div>
<svg style="left:806px;top:673px" width="13" height="14" viewBox="0 0 13 14"><path d="M6.5 0.5 L12.5 13 L6.5 9.5 L0.5 13Z" fill="#b4b4b4"/></svg>
<div class="a" style="left:350.5px;top:690px;width:46px;height:26px;background:#353535;border:1px solid #242424;border-radius:4px"></div>
<div class="t" style="left:357.3px;top:697.00px;line-height:12.00px;font-family:'Liberation Sans',sans-serif;font-size:10.5px;color:#e0e0e0;letter-spacing:-0.197px;">px</div>
<svg style="left:377.6px;top:700px" width="12" height="6.5" viewBox="0 0 12 6.5"><path d="M0.7 0.7 L6.0 5.6 L11.3 0.7" fill="none" stroke="#e8e8e8" stroke-width="1.7"/></svg>
<div class="a" style="left:397px;top:692px;width:35.5px;height:23px;background:#3a3a3a;"></div>
<div class="a" style="left:400.3px;top:698px;width:30.2px;height:11px;background:#2c2c2c;"></div>
<div class="t" style="left:409.6px;top:698.00px;line-height:11.00px;font-family:'Liberation Sans',sans-serif;font-size:10px;color:#e8e8e8;letter-spacing:-0.599px;">50 %</div>
<div class="a" style="left:432.2px;top:690px;width:18px;height:26px;background:#353535;border:1px solid #242424;border-radius:4px"></div>
<svg style="left:435.5px;top:700px" width="11.5" height="6.5" viewBox="0 0 11.5 6.5"><path d="M0.7 0.7 L5.75 5.6 L10.8 0.7" fill="none" stroke="#e8e8e8" stroke-width="1.7"/></svg>
<div class="t" style="left:461.3px;top:696.00px;line-height:14.00px;font-family:'Liberation Sans',sans-serif;font-size:12.3px;color:#e0e0e0;letter-spacing:-0.335px;">Привет #1 (9,0 МБ)</div>
<div class="a" style="left:820px;top:57px;width:1px;height:661px;background:#3a3a3a;"></div>
<div class="a" style="left:821px;top:57px;width:1px;height:661px;background:#545454;"></div>
<div class="a" style="left:822px;top:57px;width:1px;height:661px;background:#404040;"></div>
<div class="a" style="left:823px;top:57px;width:1px;height:661px;background:#585858;"></div>
<div class="a" style="left:844px;top:60px;width:75px;height:18px;background:#313131;"></div>
<div class="a" style="left:862px;top:60px;width:1px;height:18px;background:#454545;"></div>
<div class="a" style="left:881px;top:60px;width:1px;height:18px;background:#454545;"></div>
<div class="a" style="left:900px;top:60px;width:1px;height:18px;background:#454545;"></div>
<div class="a" style="left:824px;top:57px;width:20px;height:21px;background:#454545;border:1px solid #5c5c5c;border-bottom:none"></div>
<div class="a" style="left:844px;top:77px;width:75px;height:1px;background:#4c4c4c;"></div>
<svg style="left:826px;top:60.5px" width="15" height="15" viewBox="0 0 15 15"><path d="M4 0.5 H14.2 L11.2 3.8 H1Z M4 5.3 H14.2 L11.2 8.6 H1Z M4 10.1 H14.2 L11.2 13.4 H1Z" fill="#d0d0d0"/></svg>
<svg style="left:846px;top:62px" width="13" height="13" viewBox="0 0 14 14"><rect x="0.7" y="0.7" width="12.6" height="12.6" fill="none" stroke="#d0d0d0" stroke-width="1.3"/><path d="M4 2.5v9M7 2.5v9M10 2.5v9" stroke="#d0d0d0" stroke-width="1.4"/></svg>
<svg style="left:865px;top:62px" width="14" height="13" viewBox="0 0 14 13"><path d="M0.5 5 H13.5" stroke="#d0d0d0" stroke-width="1.3"/><rect x="0" y="3.7" width="2.4" height="2.4" fill="#d0d0d0"/><rect x="11.6" y="3.7" width="2.4" height="2.4" fill="#d0d0d0"/><rect x="5.6" y="3.5" width="2.8" height="2.8" fill="#d0d0d0"/><path d="M2 5.5 C3.5 8 10.5 8 12 5.5" fill="none" stroke="#d0d0d0" stroke-width="1.4"/><path d="M1.5 12 C3 6.8 11 6.8 12.5 12" fill="none" stroke="#d0d0d0" stroke-width="1.7"/></svg>
<svg style="left:883px;top:61px" width="15" height="14" viewBox="0 0 15 14"><path d="M5 3.5 H10 C12.5 3.5 13 5 13 6 M7 1.3 L4.6 3.5 L7 5.7" fill="none" stroke="#8c8c8c" stroke-width="1.4"/><path d="M2 9 H10 C13.5 9 13.5 13.3 10 13.3 H8 M5 6.3 L2 9 L5 11.7" fill="none" stroke="#d0d0d0" stroke-width="1.5"/></svg>
<svg style="left:902px;top:61px" width="15" height="14" viewBox="0 0 15 14"><rect x="0.5" y="5" width="14" height="9" fill="#d0d0d0"/><rect x="3" y="6" width="1.2" height="1.2" fill="#3a3a3a"/><rect x="7" y="6" width="1.2" height="1.2" fill="#3a3a3a"/><rect x="11" y="6" width="1.2" height="1.2" fill="#3a3a3a"/><rect x="1" y="8" width="1.2" height="1.2" fill="#3a3a3a"/><rect x="5" y="8" width="1.2" height="1.2" fill="#3a3a3a"/><rect x="9" y="8" width="1.2" height="1.2" fill="#3a3a3a"/><rect x="13" y="8" width="1.2" height="1.2" fill="#3a3a3a"/><rect x="3" y="10" width="1.2" height="1.2" fill="#3a3a3a"/><rect x="7" y="10" width="1.2" height="1.2" fill="#3a3a3a"/><rect x="11" y="10" width="1.2" height="1.2" fill="#3a3a3a"/><rect x="1" y="12" width="1.2" height="1.2" fill="#3a3a3a"/><rect x="5" y="12" width="1.2" height="1.2" fill="#3a3a3a"/><rect x="9" y="12" width="1.2" height="1.2" fill="#3a3a3a"/><rect x="13" y="12" width="1.2" height="1.2" fill="#3a3a3a"/><rect x="3" y="3" width="1" height="1.2" fill="#d0d0d0"/><rect x="6" y="3" width="1" height="1.2" fill="#d0d0d0"/><rect x="9" y="3" width="1" height="1.2" fill="#d0d0d0"/><rect x="12" y="3" width="1" height="1.2" fill="#d0d0d0"/><rect x="4.5" y="1" width="1" height="1" fill="#d0d0d0"/><rect x="7.5" y="1" width="1" height="1" fill="#d0d0d0"/><rect x="10.5" y="1" width="1" height="1" fill="#d0d0d0"/></svg>
<div class="a" style="left:1014px;top:63.5px;width:10px;height:10px;background:#454545;border:1px solid #b0b0b0"></div><svg style="left:1016px;top:65.5px" width="6" height="6" viewBox="0 0 6 6"><path d="M5.5 0.3 V5.7 L0.8 3Z" fill="#b8b8b8"/></svg>
<div class="a" style="left:826px;top:81.5px;width:155.5px;height:26px;background:#2f2f2f;border:1px solid #1f1f1f;border-radius:4px"></div>
<div class="a" style="left:983.5px;top:81.5px;width:42px;height:26px;background:#2f2f2f;border:1px solid #1f1f1f;border-radius:4px"></div>
<div class="t" style="left:833.2px;top:87.00px;line-height:13.00px;letter-spacing:-0.073px;">Режим</div>
<div class="t" style="left:882.2px;top:87.00px;line-height:13.00px;letter-spacing:-0.046px;">Нормальный</div>
<svg style="left:963px;top:91.5px" width="12.5" height="7" viewBox="0 0 12.5 7"><path d="M0.7 0.7 L6.25 6.1 L11.8 0.7" fill="none" stroke="#e8e8e8" stroke-width="1.7"/></svg>
<svg style="left:989px;top:87px" width="13" height="14" viewBox="0 0 13 14"><path d="M3.5 4.5 A4.6 4.6 0 1 1 6.5 12.5" fill="none" stroke="#d8d8d8" stroke-width="1.4"/><path d="M0.5 3.5 L5.5 1.5 L5 6.5Z" fill="#d8d8d8"/></svg>
<svg style="left:1007px;top:91.5px" width="12.5" height="7" viewBox="0 0 12.5 7"><path d="M0.7 0.7 L6.25 6.1 L11.8 0.7" fill="none" stroke="#e8e8e8" stroke-width="1.7"/></svg>
<div class="a" style="left:826px;top:109.5px;width:199px;height:28.5px;background:#2d2d2d;border:1px solid #707070"></div>
<div class="a" style="left:827px;top:110.5px;width:82px;height:26.5px;background:#595959;"></div>
<div class="a" style="left:909px;top:110.5px;width:1px;height:26.5px;background:#111;"></div>
<div class="a" style="left:1014.5px;top:110.5px;width:9.5px;height:26.5px;background:#3a3a3a;"></div>
<div class="t" style="left:828.3px;top:117.00px;line-height:13.00px;color:#e6e6e6;letter-spacing:0.073px;">Непрозрачность</div>
<div class="t" style="left:986.6px;top:117.00px;line-height:13.00px;color:#e6e6e6;letter-spacing:0.100px;">44,7</div>
<svg style="left:1015px;top:113px" width="9" height="21" viewBox="0 0 9 21"><path d="M0.7 6 L4.5 1.5 L8.3 6 M0.7 15 L4.5 19.5 L8.3 15" fill="none" stroke="#e0e0e0" stroke-width="1.5"/></svg>
<div class="a" style="left:826px;top:148px;width:198px;height:15.5px;background:#3d3d3d;"></div>
<div class="t" style="left:826.0px;top:146.00px;line-height:13.00px;letter-spacing:0.146px;">Блокировка:</div>
<svg style="left:908px;top:146px" width="52" height="13" viewBox="0 0 52 13"><path d="M11 0.5 L5.5 7 L7 8.5 L12.5 2Z M5 7.8 L6.3 9 C5.5 11 3.5 12 1 11.8 C2.5 11 3 9 5 7.8Z" fill="#b8b8b8"/><path d="M28.5 0 L31 3 H29.3 V5.7 H32 V4 L35 6.5 L32 9 V7.3 H29.3 V10 H31 L28.5 13 L26 10 H27.7 V7.3 H25 V9 L22 6.5 L25 4 V5.7 H27.7 V3 H26Z" fill="#b8b8b8"/><g fill="#a0a0a0" transform="translate(7.5 0)"><rect x="40" y="1" width="12" height="11" fill="#707070"/><rect x="40" y="1" width="3" height="3"/><rect x="46" y="1" width="3" height="3"/><rect x="43" y="4" width="3" height="3"/><rect x="49" y="4" width="3" height="3"/><rect x="40" y="7" width="3" height="3"/><rect x="46" y="7" width="3" height="3"/><rect x="43" y="10" width="3" height="2"/><rect x="49" y="10" width="3" height="2"/></g></svg>
<div class="a" style="left:826px;top:163px;width:198px;height:200px;background:#303030;"></div>
<div class="a" style="left:826px;top:163.5px;width:198px;height:30.5px;background:#1e1e1e;"></div>
<svg style="left:831px;top:172px" width="20" height="16" viewBox="0 0 20 16"><path d="M0.9 8 C5 -1.2 15 -1.2 19.1 8 C15 17.2 5 17.2 0.9 8Z" fill="none" stroke="#c6c6c6" stroke-width="1.8" stroke-linejoin="miter"/><circle cx="10" cy="8" r="3.4" fill="none" stroke="#c6c6c6" stroke-width="1.7"/><circle cx="10" cy="8" r="1.1" fill="#c6c6c6"/></svg>
<svg style="left:831px;top:204px" width="20" height="16" viewBox="0 0 20 16"><path d="M0.9 8 C5 -1.2 15 -1.2 19.1 8 C15 17.2 5 17.2 0.9 8Z" fill="none" stroke="#c6c6c6" stroke-width="1.8" stroke-linejoin="miter"/><circle cx="10" cy="8" r="3.4" fill="none" stroke="#c6c6c6" stroke-width="1.7"/><circle cx="10" cy="8" r="1.1" fill="#c6c6c6"/></svg>
<svg style="left:831px;top:236px" width="20" height="16" viewBox="0 0 20 16"><path d="M0.9 8 C5 -1.2 15 -1.2 19.1 8 C15 17.2 5 17.2 0.9 8Z" fill="none" stroke="#c6c6c6" stroke-width="1.8" stroke-linejoin="miter"/><circle cx="10" cy="8" r="3.4" fill="none" stroke="#c6c6c6" stroke-width="1.7"/><circle cx="10" cy="8" r="1.1" fill="#c6c6c6"/></svg>
<div class="a" style="left:902px;top:166px;width:36px;height:28px;background:#242424;border:2px solid #fff"></div>
<svg style="left:902px;top:166px" width="36" height="28" viewBox="0 0 36 28"><path d="M7.5 14.3 H10.8 V18.4 H28 V14.3 H31 L30 24.4 H6Z" fill="#c4c4c4"/><path d="M13 16.6 L17.6 3.3 H21.3 L26 16.6 H22.8 L21.9 13.8 H17 L16.1 16.6Z M17.9 11 H21 L19.45 6.2Z" fill="#c4c4c4" stroke="#242424" stroke-width="2.6"/><path d="M13 16.6 L17.6 3.3 H21.3 L26 16.6 H22.8 L21.9 13.8 H17 L16.1 16.6Z M17.9 11 H21 L19.45 6.2Z" fill="#c4c4c4" stroke="#c4c4c4" stroke-width="0.7"/></svg>
<div class="a" style="left:902px;top:198px;width:36px;height:28px;background:#242424;border:2px solid #000"></div>
<svg style="left:902px;top:198px" width="36" height="28" viewBox="0 0 36 28"><path d="M7.5 14.3 H10.8 V18.4 H28 V14.3 H31 L30 24.4 H6Z" fill="#c4c4c4"/><path d="M13 16.6 L17.6 3.3 H21.3 L26 16.6 H22.8 L21.9 13.8 H17 L16.1 16.6Z M17.9 11 H21 L19.45 6.2Z" fill="#c4c4c4" stroke="#242424" stroke-width="2.6"/><path d="M13 16.6 L17.6 3.3 H21.3 L26 16.6 H22.8 L21.9 13.8 H17 L16.1 16.6Z M17.9 11 H21 L19.45 6.2Z" fill="#c4c4c4" stroke="#c4c4c4" stroke-width="0.7"/></svg>
<div class="a" style="left:902px;top:230px;width:36px;height:28px;background:#fff;border:2px solid #000"></div>
<div class="t" style="left:942.5px;top:173.00px;line-height:13.00px;color:#e8e8e8;letter-spacing:0.002px;">Привет #1</div>
<div class="t" style="left:942.5px;top:205.00px;line-height:13.00px;">Привет</div>
<div class="t" style="left:942.5px;top:236.00px;line-height:13.00px;font-weight:700;color:#e8e8e8;letter-spacing:-0.026px;">Фон</div>
<div class="a" style="left:826px;top:363px;width:198px;height:25px;background:#3c3c3c;"></div>
<svg style="left:831px;top:366.5px" width="14" height="16" viewBox="0 0 14 16"><path d="M3.5 4 H9 L12.5 7.5 V15 H3.5Z" fill="none" stroke="#b8b8b8" stroke-width="1.4"/><path d="M9 4 V7.5 H12.5" fill="none" stroke="#b8b8b8" stroke-width="1.2"/><path d="M3 0.5 v6 M0 3.5 h6" stroke="#b8b8b8" stroke-width="1.5"/></svg>
<svg style="left:856.5px;top:367.5px" width="15" height="14" viewBox="0 0 15 14"><path d="M0.5 1 H5.5 L7 3 H14 V13.5 H0.5Z" fill="#b8b8b8"/><path d="M8 5.5 v6 M5 8.5 h6" stroke="#454545" stroke-width="1.6"/></svg>
<svg style="left:881.6px;top:370.0px" width="14" height="8" viewBox="0 0 14 8"><path d="M1 7 L7 1.2 L13 7" fill="none" stroke="#b8b8b8" stroke-width="1.7"/></svg>
<svg style="left:906px;top:371.0px" width="14" height="8" viewBox="0 0 14 8"><path d="M1 1 L7 6.8 L13 1" fill="none" stroke="#b8b8b8" stroke-width="1.7"/></svg>
<svg style="left:933.0px;top:369.3px" width="11.5" height="10.5" viewBox="0 0 11.5 10.5"><rect x="0.7" y="0.7" width="6.6" height="5" fill="none" stroke="#b8b8b8" stroke-width="1.1"/><path d="M9 3.6 H10.8 V9.8 H4 V7.6" fill="none" stroke="#b8b8b8" stroke-width="1.1"/></svg>
<svg style="left:957.3px;top:366.5px" width="13" height="16" viewBox="0 0 13 16"><circle cx="6.5" cy="2.5" r="1.7" fill="none" stroke="#b8b8b8" stroke-width="1.2"/><path d="M6.5 4.2 V14.5 M3.5 7 H9.5" stroke="#b8b8b8" stroke-width="1.4" stroke-dasharray="1.6 .8"/><path d="M1 9.5 C1.5 13 4 14.5 6.5 14.5 C9 14.5 11.5 13 12 9.5" fill="none" stroke="#b8b8b8" stroke-width="1.4" stroke-dasharray="1.6 .8"/></svg>
<svg style="left:980px;top:366.5px" width="17" height="16" viewBox="0 0 17 16"><path d="M4.5 0.5 H12 V5 C12 7.5 10.5 8.5 8.2 8.5 C6 8.5 4.5 7.5 4.5 5Z" fill="#b8b8b8"/><circle cx="6.8" cy="3.3" r=".8" fill="#454545"/><circle cx="9.8" cy="3.3" r=".8" fill="#454545"/><path d="M6.5 5.5 C7.5 6.5 9 6.5 10 5.5" stroke="#454545" fill="none" stroke-width=".8"/><path d="M4 10 H16.5 L13 14.5 H0.5Z" fill="#b8b8b8"/></svg>
<svg style="left:1006.1px;top:367.0px" width="15" height="15" viewBox="0 0 15 15"><rect x="0.5" y="0.5" width="14" height="14" rx="1" fill="#c4c4c4"/><path d="M3.2 3.2 L11.8 11.8 M11.8 3.2 L3.2 11.8" stroke="#3a3a3a" stroke-width="2.2"/></svg>
<div class="a" style="left:824px;top:388px;width:209px;height:1px;background:#555;"></div>
<div class="a" style="left:919px;top:389px;width:4px;height:2px;background:#8c8c8c;"></div>
<div class="a" style="left:925.5px;top:389px;width:4px;height:2px;background:#8c8c8c;"></div>
<div class="a" style="left:932px;top:389px;width:4px;height:2px;background:#8c8c8c;"></div>
<div class="a" style="left:826px;top:394px;width:40px;height:19px;background:#3c3c3c;"></div>
<div class="a" style="left:846px;top:394px;width:1px;height:19px;background:#505050;"></div>
<div class="a" style="left:866px;top:392.5px;width:21.5px;height:21px;background:#454545;border:1px solid #5a5a5a;border-bottom:none"></div>
<div class="a" style="left:824px;top:413px;width:42px;height:1px;background:#565656;"></div>
<div class="a" style="left:887px;top:413px;width:138px;height:1px;background:#565656;"></div>
<div class="a" style="left:827.5px;top:396px;width:14.5px;height:14.5px;background:#fff;background:radial-gradient(circle at 50% 50%,#000 0,#000 12%,#fff 62%);border:1px solid #222"></div>
<div class="a" style="left:848px;top:396px;width:15px;height:14.5px;background:#8a3a12;background:repeating-linear-gradient(0deg,#8b3d14 0,#a04a1a 2px,#7a300e 3.5px,#93401a 5px);border:1px solid #222"></div>
<div class="a" style="left:868.5px;top:395px;width:15px;height:14.5px;background:#000;background:linear-gradient(90deg,#000,#fff);border:1px solid #111"></div>
<div class="a" style="left:1014px;top:398.4px;width:10px;height:10px;background:#454545;border:1px solid #b0b0b0"></div><svg style="left:1016px;top:400.4px" width="6" height="6" viewBox="0 0 6 6"><path d="M5.5 0.3 V5.7 L0.8 3Z" fill="#b8b8b8"/></svg>
<div class="a" style="left:826px;top:414px;width:198px;height:23px;background:#3a3a3a;"></div>
<div class="a" style="left:828px;top:418px;width:196px;height:17px;background:#222;"></div>
<div class="t" style="left:830.0px;top:420.00px;line-height:13.00px;font-style:italic;color:#747474;letter-spacing:-0.064px;">фильтр по меткам</div>
<svg style="left:1010.5px;top:424px" width="9" height="6" viewBox="0 0 9 6"><path d="M0.7 0.7 L4.5 5.1 L8.3 0.7" fill="none" stroke="#f0f0f0" stroke-width="1.8"/></svg>
<div class="a" style="left:828px;top:436.5px;width:183px;height:220px;background:#303030;"></div>
<div class="a" style="left:1010.7px;top:436.5px;width:14.3px;height:220px;background:#242424;"></div>
<div class="a" style="left:1012px;top:452px;width:13px;height:29.5px;background:#5c5c5c;border-radius:2px"></div>
<div class="a" style="left:828px;top:436px;width:183px;height:220.5px;overflow:hidden">
<div class="a" style="left:1px;top:4px;width:34px;height:19px;background:#000;background:linear-gradient(90deg,#000 0,#000 48%,#fff 50%,#fff 100%);border:1px solid #000"></div>
<div class="t" style="left:39.3px;top:7.00px;line-height:13.00px;color:#e4e4e4;letter-spacing:0.36px;">Основной в фоновый (р</div>
<div class="a" style="left:1px;top:27px;width:34px;height:19px;background:#000;background:linear-gradient(90deg,#4040ff 0,#4a55ff 40%,#2a8af0 60%,#20c0a0 70%,#c040ff 80%,#ff50d0 88%,#ffe000 96%);border:1px solid #000"></div>
<div class="t" style="left:39.3px;top:30.00px;line-height:13.00px;color:#e4e4e4;letter-spacing:0.023px;">Abstract 1</div>
<div class="a" style="left:1px;top:50px;width:34px;height:19px;background:#000;background:linear-gradient(90deg,#ff0020 0,#f03070 30%,#e050c0 55%,#40c080 70%,#f0f080 82%,#6060ff 92%,#2020c0 100%);border:1px solid #000"></div>
<div class="t" style="left:39.3px;top:53.00px;line-height:13.00px;color:#e4e4e4;letter-spacing:0.023px;">Abstract 2</div>
<div class="a" style="left:1px;top:73px;width:34px;height:19px;background:#000;background:linear-gradient(90deg,#20a000 0,#c0a050 20%,#f0b060 42%,#3050b0 60%,#90a0b0 75%,#e0d890 88%,#00e000 100%);border:1px solid #000"></div>
<div class="t" style="left:39.3px;top:76.00px;line-height:13.00px;color:#e4e4e4;letter-spacing:0.023px;">Abstract 3</div>
<div class="a" style="left:1px;top:96px;width:34px;height:19px;background:#000;background:linear-gradient(90deg,#555 0,#3a0a50 25%,#500050 40%,#c00010 48%,#500050 56%,#3a0a50 75%,#555 100%);border:1px solid #000"></div>
<div class="t" style="left:39.3px;top:99.00px;line-height:13.00px;color:#e4e4e4;letter-spacing:0.179px;">Aneurism</div>
<div class="a" style="left:1px;top:119px;width:34px;height:19px;background:#000;background:linear-gradient(90deg,#000 0,#fff 20%,#000 33%,#000 34%,#fff 53%,#000 66%,#000 67%,#fff 86%,#000 100%);border:1px solid #000"></div>
<div class="t" style="left:39.3px;top:122.00px;line-height:13.00px;color:#e4e4e4;letter-spacing:-0.057px;">Blinds</div>
<div class="a" style="left:1px;top:142px;width:34px;height:19px;background:#000;background:linear-gradient(90deg,#1a80ff 0,#30b0ff 40%,#30e0e0 75%,#20f0b0 100%);border:1px solid #000"></div>
<div class="t" style="left:39.3px;top:145.00px;line-height:13.00px;color:#e4e4e4;letter-spacing:0.234px;">Blue Green</div>
<div class="a" style="left:1px;top:165px;width:34px;height:19px;background:#000;background:linear-gradient(90deg,#c07030 0,#a05c10 22%,#d08848 40%,#b87050 52%,#c89070 66%,#a06848 80%,#c08860 100%);border:1px solid #000"></div>
<div class="t" style="left:39.3px;top:168.00px;line-height:13.00px;color:#e4e4e4;letter-spacing:0.206px;">Browns</div>
<div class="a" style="left:1px;top:188px;width:34px;height:19px;background:#000;background:linear-gradient(90deg,#808080 0,#c8c8c8 25%,#f0f0f0 48%,#a8a8a8 62%,#707070 80%,#909090 100%);border:1px solid #000"></div>
<div class="t" style="left:39.3px;top:191.00px;line-height:13.00px;color:#e4e4e4;letter-spacing:0.157px;">Brushed Aluminium</div>
<div class="a" style="left:1px;top:211px;width:34px;height:19px;background:#000;background:linear-gradient(90deg,#fff 0,#fff 58%,#301000 62%,#c02000 70%,#ffc000 82%,#ff4000 100%);border:1px solid #000"></div>
<div class="t" style="left:39.3px;top:214.00px;line-height:13.00px;color:#e4e4e4;letter-spacing:0.263px;">Burning Paper</div>
</div>
<div class="a" style="left:826px;top:656.5px;width:185px;height:15.5px;background:#202020;"></div>
<div class="a" style="left:1011px;top:656.5px;width:14px;height:15.5px;background:#303030;"></div>
<div class="a" style="left:827px;top:658px;width:106px;height:12.5px;background:#5c5c5c;border-radius:2px"></div>
<div class="a" style="left:826px;top:672px;width:198px;height:21px;background:#3a3a3a;"></div>
<div class="a" style="left:828px;top:674px;width:196px;height:17px;background:#222;"></div>
<div class="t" style="left:830.0px;top:676.00px;line-height:13.00px;font-style:italic;color:#747474;letter-spacing:-0.041px;">введите метки</div>
<svg style="left:1010.5px;top:680px" width="9" height="6" viewBox="0 0 9 6"><path d="M0.7 0.7 L4.5 5.1 L8.3 0.7" fill="none" stroke="#f0f0f0" stroke-width="1.8"/></svg>
<div class="a" style="left:826px;top:693px;width:198px;height:25px;background:#3c3c3c;"></div>
<svg style="left:838px;top:697.6px" width="15" height="14" viewBox="0 0 15 14"><path d="M0.5 3h6M0.5 7h4.5M0.5 12.5h11" stroke="#b8b8b8" stroke-width="1.5"/><path d="M12 1 L14 3 L7.5 9.5 L5 10.5 L6 8Z" fill="#b8b8b8"/></svg>
<svg style="left:878px;top:696.6px" width="14" height="16" viewBox="0 0 14 16"><path d="M3.5 4 H9 L12.5 7.5 V15 H3.5Z" fill="none" stroke="#b8b8b8" stroke-width="1.4"/><path d="M9 4 V7.5 H12.5" fill="none" stroke="#b8b8b8" stroke-width="1.2"/><path d="M3 0.5 v6 M0 3.5 h6" stroke="#b8b8b8" stroke-width="1.5"/></svg>
<svg style="left:919.5px;top:699.4px" width="11.5" height="10.5" viewBox="0 0 11.5 10.5"><rect x="0.7" y="0.7" width="6.6" height="5" fill="none" stroke="#b8b8b8" stroke-width="1.1"/><path d="M9 3.6 H10.8 V9.8 H4 V7.6" fill="none" stroke="#b8b8b8" stroke-width="1.1"/></svg>
<svg style="left:959px;top:698px" width="13" height="14" viewBox="0 0 13 14"><rect x="0" y="0" width="13" height="14" fill="url(#dz)" shape-rendering="crispEdges"/><path d="M3 3.5 L10 10.5 M10 3.5 L3 10.5" stroke="#3a3a3a" stroke-width="2.2"/></svg>
<svg style="left:998.8px;top:697.6px" width="14" height="14" viewBox="0 0 14 14"><path d="M10.5 3.8 A5 5 0 1 0 12 8.5" fill="none" stroke="#b8b8b8" stroke-width="1.7"/><path d="M13.5 0.8 V6.5 H7.8Z" fill="#b8b8b8"/></svg>
<div class="t" style="left:470px;top:306px;line-height:77px;font-family:'Liberation Serif',serif;font-size:70px;font-weight:700;font-style:italic;color:#c6c6c6;letter-spacing:6.8px;-webkit-text-stroke:1.2px #c6c6c6;">При<span style='display:inline-block;transform:scaleY(1.4);transform-origin:50% 80.5%'>в</span>е<span style='display:inline-block;transform:scaleX(1.09);transform-origin:0 50%'>т</span></div>
<div class="t" style="left:431.3px;top:328px;line-height:77px;font-family:'Liberation Serif',serif;font-size:70px;font-weight:700;font-style:italic;color:#000;letter-spacing:6.8px;-webkit-text-stroke:1.2px #000;">При<span style='display:inline-block;transform:scaleY(1.4);transform-origin:50% 80.5%'>в</span>е<span style='display:inline-block;transform:scaleX(1.09);transform-origin:0 50%'>т</span></div>
<svg style="left:464px;top:295px" width="288" height="157" viewBox="0 0 288 157" shape-rendering="crispEdges"><rect x="0.5" y="0.5" width="286" height="155.5" fill="none" stroke="#ffee00" stroke-width="1"/><rect x="0.5" y="0.5" width="286" height="155.5" fill="none" stroke="#000" stroke-width="1" stroke-dasharray="3 3"/></svg>
<div class="a" style="left:1029px;top:0px;width:4px;height:718px;background:#fff;"></div>
<svg style="left:0;top:0" width="1033" height="718" viewBox="0 0 1033 718"><rect x="2.80" y="100.50" width="27.10" height="27.40" rx="5.00" fill="none" stroke="#e53a30" stroke-width="5"/></svg>
<div class="a" style="left:35.9px;top:86px;width:50.1px;height:49.9px;background:rgba(233,233,233,0.92);border-radius:3px;text-align:center;line-height:49.9px;font-family:'Liberation Sans',sans-serif;font-size:32.5px;color:#e53a30;-webkit-text-stroke:0.25px #e53a30"><span style="position:relative;top:1px">3</span></div>
<svg style="left:0;top:0" width="1033" height="718" viewBox="0 0 1033 718"><rect x="5.35" y="242.55" width="118.10" height="44.50" rx="5.95" fill="none" stroke="#e53a30" stroke-width="5.1"/></svg>
<div class="a" style="left:130px;top:237.2px;width:49.8px;height:49.7px;background:rgba(233,233,233,0.92);border-radius:3px;text-align:center;line-height:49.7px;font-family:'Liberation Sans',sans-serif;font-size:32.5px;color:#e53a30;-webkit-text-stroke:0.25px #e53a30"><span style="position:relative;top:1px">4</span></div>
<svg style="left:0;top:0" width="1033" height="718" viewBox="0 0 1033 718"><rect x="816.50" y="99.40" width="213.40" height="45.70" rx="6.00" fill="none" stroke="#e53a30" stroke-width="5"/></svg>
<div class="a" style="left:755.9px;top:125px;width:49.8px;height:50.0px;background:rgba(233,233,233,0.92);border-radius:3px;text-align:center;line-height:50.0px;font-family:'Liberation Sans',sans-serif;font-size:32.5px;color:#e53a30;-webkit-text-stroke:0.25px #e53a30"><span style="position:relative;top:1px">2</span></div>
<svg style="left:0;top:0" width="1033" height="718" viewBox="0 0 1033 718"><rect x="820.35" y="148.65" width="205.90" height="49.00" rx="5.15" fill="none" stroke="#e53a30" stroke-width="4.7"/></svg>
<div class="a" style="left:858px;top:309.8px;width:50.0px;height:50.2px;background:rgba(233,233,233,0.92);border-radius:3px;text-align:center;line-height:50.2px;font-family:'Liberation Sans',sans-serif;font-size:32.5px;color:#e53a30;-webkit-text-stroke:0.25px #e53a30"><span style="position:relative;top:1px"><span style='position:relative;left:1.3px;top:-1px'>1</span></span></div>
<div class="a" style="left:875px;top:343.4px;width:7.3px;height:4.2px;background:#dadada;"></div>
<div class="a" style="left:886.6px;top:343.4px;width:6px;height:4.2px;background:#dadada;"></div>
<svg style="left:0;top:0" width="1033" height="718" viewBox="0 0 1033 718"><rect x="915.60" y="345.50" width="41.70" height="49.00" rx="6.00" fill="none" stroke="#e53a30" stroke-width="5"/></svg>
</body></html>
